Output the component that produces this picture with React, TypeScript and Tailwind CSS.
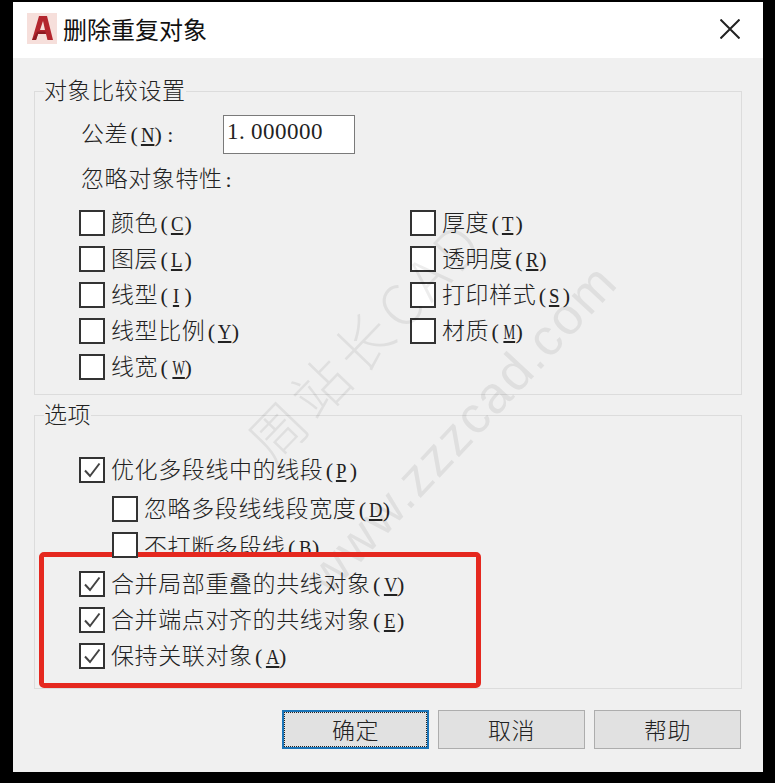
import React from "react";

const labelFont = { fontFamily: '"Noto Sans CJK SC", sans-serif' };

const Cell = ({ children, className = "" }: { children: string; className?: string }) => (
  <span className={`inline-block w-[12px] text-center font-['Liberation_Serif',serif] text-[22px] tracking-normal ${className}`}>
    {children}
  </span>
);

const Label = ({ text, k, colon }: { text: string; k?: string; colon?: boolean }) => (
  <span className="pb-[2px] text-[23px] leading-[26px] font-light tracking-[0.6px] text-[#222] whitespace-nowrap font-['Noto_Sans_CJK_SC',sans-serif]">
    {text}
    {k && (
      <>
        <Cell>(</Cell>
        <Cell className={`underline ${k === "W" || k === "M" ? "scale-x-[0.6]" : "scale-x-[0.85]"}`}>{k}</Cell>
        <Cell>)</Cell>
      </>
    )}
    {colon && <Cell>:</Cell>}
  </span>
);

const Box = ({ checked, over }: { checked?: boolean; over?: boolean }) => (
  <span className={`w-[26px] h-[26px] shrink-0 bg-white border-2 border-[#333] flex items-center justify-center ${over ? "relative z-20" : ""}`}>
    {checked && (
      <svg width="22" height="22" viewBox="0 0 22 22" fill="none">
        <path d="M4 11.5 L9 17 L18.5 4.5" stroke="#444" strokeWidth="2" />
      </svg>
    )}
  </span>
);

const Check = ({ text, k, checked, className = "" }: { text: string; k: string; checked?: boolean; className?: string }) => (
  <div className={`flex items-center gap-[6px] h-[26px] ${className}`}>
    <Box checked={checked} />
    <Label text={text} k={k} />
  </div>
);

// fieldset padding also moves the legend, so pull it back to the box edge
const Legend = ({ children }: { children: string }) => (
  <legend className="-ml-[35px] h-[28px] pb-[2px] flex items-center">
    <Label text={children} />
  </legend>
);

const Btn = ({ text, primary }: { text: string; primary?: boolean }) => (
  <button
    className={`w-[147px] h-[39px] bg-[#e1e1e1] flex items-center justify-center ${
      primary ? "border-2 border-[#1a74b8]" : "border border-[#adadad]"
    }`}
  >
    {primary ? (
      <span className="w-full h-full border border-dotted border-[#222] flex items-center justify-center">
        <Label text={text} />
      </span>
    ) : (
      <Label text={text} />
    )}
  </button>
);

const AcadLogo = () => (
  <svg width="30" height="31" viewBox="0 0 30 31">
    <rect width="30" height="31" fill="#f6dfdb" />
    <path d="M5 27 L12 3 L20 3 L26 27 L20.5 27 L19 21 L11 21 L9 27 Z" fill="#b3262e" />
    <path d="M13 17 L18 17 L16 8 Z" fill="#f6dfdb" />
    <path d="M9 27 L11 21 L19 21 L18.2 18.5 L10.5 18.5 L5 27 Z" fill="#8e1a22" />
  </svg>
);

export default function App() {
  return (
    <div className="w-[775px] h-[783px] bg-black pt-[2px] pl-[13px] overflow-hidden" style={labelFont}>
      <div className="relative w-[750px] h-[770px] flex flex-col overflow-hidden">
        {/* Title bar */}
        <div className="h-[56px] shrink-0 bg-white flex items-center justify-between pl-[14px] pr-[23px] pb-[3px]">
          <div className="flex items-center gap-[6px]">
            <AcadLogo />
            <span className="text-[24px] leading-[30px] text-[#111]">删除重复对象</span>
          </div>
          <svg width="20" height="20" viewBox="0 0 20 20">
            <path d="M0.5 0.5 L19.5 19.5 M19.5 0.5 L0.5 19.5" stroke="#222" strokeWidth="2" />
          </svg>
        </div>

        <div className="flex-1 bg-[#f0f0f0] px-[21px] pt-[19px]">
          <fieldset className="border border-[#dcdcdc] h-[318px] pl-[44px] pt-[10px]">
            <Legend>对象比较设置</Legend>
            <div className="flex items-center h-[39px] pl-[2px]">
              <span className="w-[142px] flex">
                <Label text="公差" k="N" colon />
              </span>
              <div className="w-[132px] h-[39px] bg-white border border-[#7a7a7a] flex items-center pl-[3px] pb-[4px] font-['Liberation_Serif',serif] text-[23px] tracking-[0.5px] text-[#222]">
                1<span className="inline-block w-[12px]">.</span>000000
              </div>
            </div>
            <div className="mt-[13px] h-[24px] flex items-center pl-[2px]">
              <Label text="忽略对象特性" colon />
            </div>
            <div className="mt-[19px] grid grid-cols-[331px_1fr] gap-y-[10px]">
              <Check text="颜色" k="C" />
              <Check text="厚度" k="T" />
              <Check text="图层" k="L" />
              <Check text="透明度" k="R" />
              <Check text="线型" k="I" />
              <Check text="打印样式" k="S" />
              <Check text="线型比例" k="Y" />
              <Check text="材质" k="M" />
              <Check text="线宽" k="W" />
            </div>
          </fieldset>

          <fieldset className="mt-[6px] border border-[#dcdcdc] h-[288px] pl-[44px] pt-[28px]">
            <Legend>选项</Legend>
            <Check text="优化多段线中的线段" k="P" checked />
            <Check text="忽略多段线线段宽度" k="D" className="mt-[13px] ml-[33px]" />
            <div className="mt-[10px] ml-[33px] flex gap-[6px] h-[26px]">
              <Box over />
              <div className="h-[20px] overflow-hidden">
                <Label text="不打断多段线" k="B" />
              </div>
            </div>
            <Check text="合并局部重叠的共线对象" k="V" checked className="mt-[13px]" />
            <Check text="合并端点对齐的共线对象" k="E" checked className="mt-[10px]" />
            <Check text="保持关联对象" k="A" checked className="mt-[10px]" />
          </fieldset>

          <div className="mt-[21px] flex justify-end gap-[9px] mr-[1px]">
            <Btn text="确定" primary />
            <Btn text="取消" />
            <Btn text="帮助" />
          </div>
        </div>

        {/* red annotation pasted over the dialog */}
        <div className="absolute left-[26px] top-[550px] w-[442px] h-[136px] border-[5px] border-[#e5281f] rounded-[5px] z-10 pointer-events-none" />

        {/* watermark */}
        <div className="absolute left-[196px] top-[302px] text-[56px] leading-[70px] tracking-[6px] text-black/[0.07] font-light whitespace-nowrap -rotate-[46deg] pointer-events-none z-[5]">
          周站长CAD
        </div>
        <div className="absolute left-[235px] top-[396px] text-[52px] leading-[60px] tracking-[2px] text-black/[0.07] whitespace-nowrap -rotate-[47deg] pointer-events-none z-[5] font-['Liberation_Sans',sans-serif]">
          www.zzzcad.com
        </div>
      </div>
    </div>
  );
}
